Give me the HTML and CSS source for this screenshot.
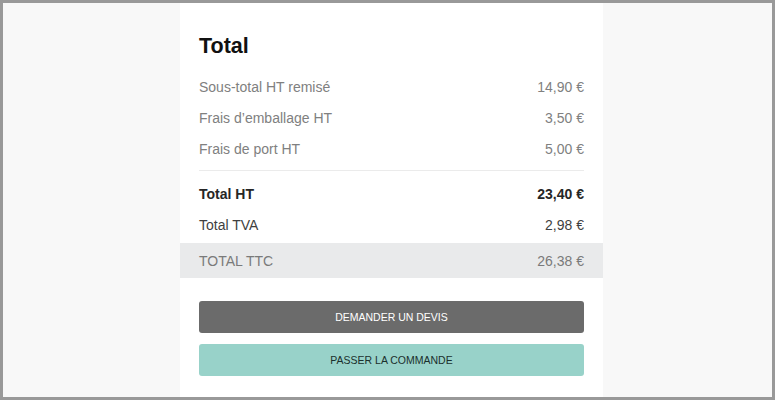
FILE: index.html
```html
<!DOCTYPE html>
<html lang="fr">
<head>
  <meta charset="UTF-8">
  <meta name="viewport" content="width=device-width, initial-scale=1.0">
  <title>Total</title>
  <link rel="stylesheet" href="styles.css">
</head>
<body>
  <div class="frame">
    <div class="summary">
      <h2 class="title">Total</h2>

      <!-- Sous-totaux -->
      <div class="row muted"><span>Sous-total HT remisé</span><span>14,90 €</span></div>
      <div class="row muted"><span>Frais d’emballage HT</span><span>3,50 €</span></div>
      <div class="row muted"><span>Frais de port HT</span><span>5,00 €</span></div>

      <hr class="sep">

      <div class="row strong"><span>Total HT</span><span>23,40 €</span></div>
      <div class="row"><span>Total TVA</span><span>2,98 €</span></div>
      <div class="row grand"><span>TOTAL TTC</span><span>26,38 €</span></div>

      <div class="actions">
        <button class="btn btn-quote">DEMANDER UN DEVIS</button>
        <button class="btn btn-order">PASSER LA COMMANDE</button>
      </div>
    </div>
  </div>
</body>
</html>
```

FILE: styles.css
```css
* { box-sizing: border-box; margin: 0; padding: 0; }
body {
  font-family: "Liberation Sans", Arial, sans-serif;
  background: #fff;
}
.frame {
  width: 775px;
  height: 400px;
  border: 3px solid #999;
  background-color: #f8f8f8;
  display: flex;
}
.summary {
  width: 423px;
  margin-left: 177px;
  background-color: #fff;
  padding: 30px 19px 0;
}
.title {
  font-size: 21.5px;
  line-height: 26px;
  font-weight: bold;
  color: #111;
  margin-bottom: 12px;
}

.row {
  display: flex;
  justify-content: space-between;
  align-items: center;
  height: 31px;
  font-size: 14px;
  color: #3f3f3f;
}
.row.muted { color: #808080; }
.row.strong { font-weight: bold; color: #262626; }
.row.grand {
  height: 35px;
  margin: 3px -19px 0;
  padding: 0 19px;
  background-color: #e9eaeb;
  color: #7a7a7a;
}

.sep {
  border: none;
  border-top: 1px solid #ebebeb;
  margin: 6px 0 7px;
}

.actions {
  display: flex;
  flex-direction: column;
  gap: 11px;
  margin-top: 23px;
}
.btn {
  height: 32px;
  border: none;
  border-radius: 3px;
  font-family: inherit;
  font-size: 10.5px;
  cursor: pointer;
}
.btn-quote {
  background-color: #6b6b6b;
  color: #fff;
}
.btn-order {
  background-color: #98d2c9;
  color: #1b302d;
}
```
